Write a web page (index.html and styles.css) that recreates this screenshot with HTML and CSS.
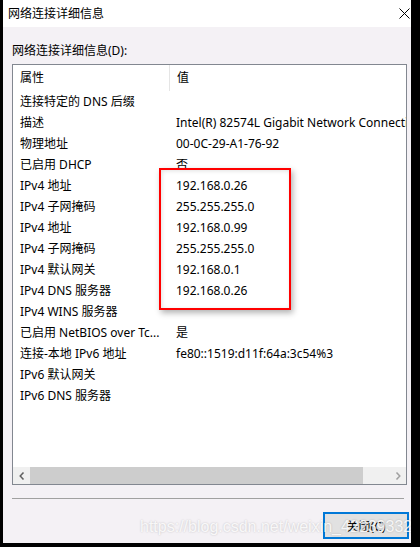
FILE: index.html
```html
<!DOCTYPE html>
<html>
<head>
  <meta charset="utf-8">
  <title>网络连接详细信息</title>
  <link rel="stylesheet" href="styles.css">
</head>
<body>
  <div class="window">
    <!-- Title bar -->
    <div class="titlebar">
      <span class="title">网络连接详细信息</span>
      <svg class="close" width="12" height="11" viewBox="0 0 12 11">
        <path d="M0.5 0.5 L10.5 10.5 M10.5 0.5 L0.5 10.5" stroke="#000" stroke-width="1" fill="none"/>
      </svg>
    </div>

    <div class="content">
      <div class="caption">网络连接详细信息(D):</div>

      <!-- Details list -->
      <div class="listbox">
        <div class="list-head">
          <div class="name">属性</div>
          <div class="value">值</div>
        </div>
        <div class="rows">
          <div class="row"><span class="name">连接特定的 DNS 后缀</span><span class="value"></span></div>
          <div class="row"><span class="name">描述</span><span class="value">Intel(R) 82574L Gigabit Network Connection</span></div>
          <div class="row"><span class="name">物理地址</span><span class="value">00-0C-29-A1-76-92</span></div>
          <div class="row"><span class="name">已启用 DHCP</span><span class="value">否</span></div>
          <div class="row"><span class="name">IPv4 地址</span><span class="value">192.168.0.26</span></div>
          <div class="row"><span class="name">IPv4 子网掩码</span><span class="value">255.255.255.0</span></div>
          <div class="row"><span class="name">IPv4 地址</span><span class="value">192.168.0.99</span></div>
          <div class="row"><span class="name">IPv4 子网掩码</span><span class="value">255.255.255.0</span></div>
          <div class="row"><span class="name">IPv4 默认网关</span><span class="value">192.168.0.1</span></div>
          <div class="row"><span class="name">IPv4 DNS 服务器</span><span class="value">192.168.0.26</span></div>
          <div class="row"><span class="name">IPv4 WINS 服务器</span><span class="value"></span></div>
          <div class="row"><span class="name">已启用 NetBIOS over Tc...</span><span class="value">是</span></div>
          <div class="row"><span class="name">连接-本地 IPv6 地址</span><span class="value">fe80::1519:d11f:64a:3c54%3</span></div>
          <div class="row"><span class="name">IPv6 默认网关</span><span class="value"></span></div>
          <div class="row"><span class="name">IPv6 DNS 服务器</span><span class="value"></span></div>
        </div>
        <div class="spacer"></div>
        <!-- Horizontal scrollbar -->
        <div class="hscroll">
          <div class="arrow">
            <svg width="6" height="8" viewBox="0 0 6 8"><path d="M4.5 0.5 L1.2 4 L4.5 7.5" stroke="#606060" stroke-width="1.5" fill="none"/></svg>
          </div>
          <div class="thumb"></div>
          <div class="track"></div>
          <div class="arrow">
            <svg width="6" height="8" viewBox="0 0 6 8"><path d="M1.5 0.5 L4.8 4 L1.5 7.5" stroke="#a0a0a0" stroke-width="1.5" fill="none"/></svg>
          </div>
        </div>
      </div>

      <div class="separator"></div>

      <div class="actions">
        <button class="btn-close">关闭(C)</button>
      </div>
    </div>

    <!-- Annotation and watermark drawn over the dialog -->
    <div class="highlight"></div>
    <div class="watermark">https://blog.csdn.net/weixin_42239332</div>
  </div>
</body>
</html>
```

FILE: styles.css
```css
body {
  margin: 0;
  background-color: #000000;
  font-family: "Noto Sans", "Noto Sans CJK SC", sans-serif;
  font-size: 12px;
  color: #000000;
}

.window {
  position: relative;
  margin-left: 3px;
  width: 408px;
  height: 543px;
  display: flex;
  flex-direction: column;
  overflow: hidden;
}

.titlebar {
  height: 27px;
  flex: none;
  background-color: #FFFFFF;
  display: flex;
  align-items: center;
  justify-content: space-between;
  padding: 0 0 0 5px;
}

.title {
  line-height: 27px;
}

.content {
  flex: 1;
  background-color: #F4F1F5;
  padding: 15px 4px 0 9px;
  display: flex;
  flex-direction: column;
}

.caption {
  line-height: 17px;
  margin-bottom: 5px;
}

.listbox {
  height: 421px;
  box-sizing: border-box;
  border: 1px solid #828790;
  background-color: #FFFFFF;
  display: flex;
  flex-direction: column;
  overflow: hidden;
}

.list-head {
  display: flex;
  height: 26px;
  flex: none;
  line-height: 26px;
}

.list-head .name {
  width: 157px;
  box-sizing: border-box;
  padding-left: 7px;
  border-right: 1px solid #E5E5E5;
}

.list-head .value {
  padding-left: 7px;
}

.row {
  display: flex;
  height: 21px;
  line-height: 21px;
  white-space: nowrap;
}

.row .name {
  width: 157px;
  flex: none;
  box-sizing: border-box;
  padding-left: 7px;
}

.row .value {
  padding-left: 6px;
  white-space: nowrap;
}

.spacer {
  flex: 1;
}

.hscroll {
  height: 17px;
  flex: none;
  display: flex;
  background-color: #F0F0F0;
}

.arrow {
  width: 17px;
  flex: none;
  display: flex;
  align-items: center;
  justify-content: center;
}

.thumb {
  width: 333px;
  flex: none;
  background-color: #CDCDCD;
}

.track {
  flex: 1;
}

.separator {
  height: 1px;
  background-color: #A0A0A0;
  margin: 13px 3px 0 0;
}

.actions {
  display: flex;
  justify-content: flex-end;
  margin-top: 13px;
  margin-right: -2px;
}

.btn-close {
  width: 86px;
  height: 27px;
  border: 2px solid #0078D7;
  background-color: #E1E1E1;
  font-family: "Noto Sans", "Noto Sans CJK SC", sans-serif;
  font-size: 12px;
  color: #000000;
  padding: 0;
}

.highlight {
  position: absolute;
  left: 156px;
  top: 168px;
  width: 132px;
  height: 142px;
  box-sizing: border-box;
  border: 2px solid #FF0000;
  box-shadow: 2px 3px 6px rgba(0, 0, 0, 0.3), inset 1px 1px 4px rgba(0, 0, 0, 0.12);
}

.watermark {
  position: absolute;
  left: 137px;
  top: 518px;
  font-family: "Liberation Sans", Arial, sans-serif;
  font-size: 16px;
  line-height: 18px;
  white-space: nowrap;
  color: rgba(255, 255, 255, 0.85);
  text-shadow: 0 0 2px rgba(0, 0, 0, 0.22);
}
```
